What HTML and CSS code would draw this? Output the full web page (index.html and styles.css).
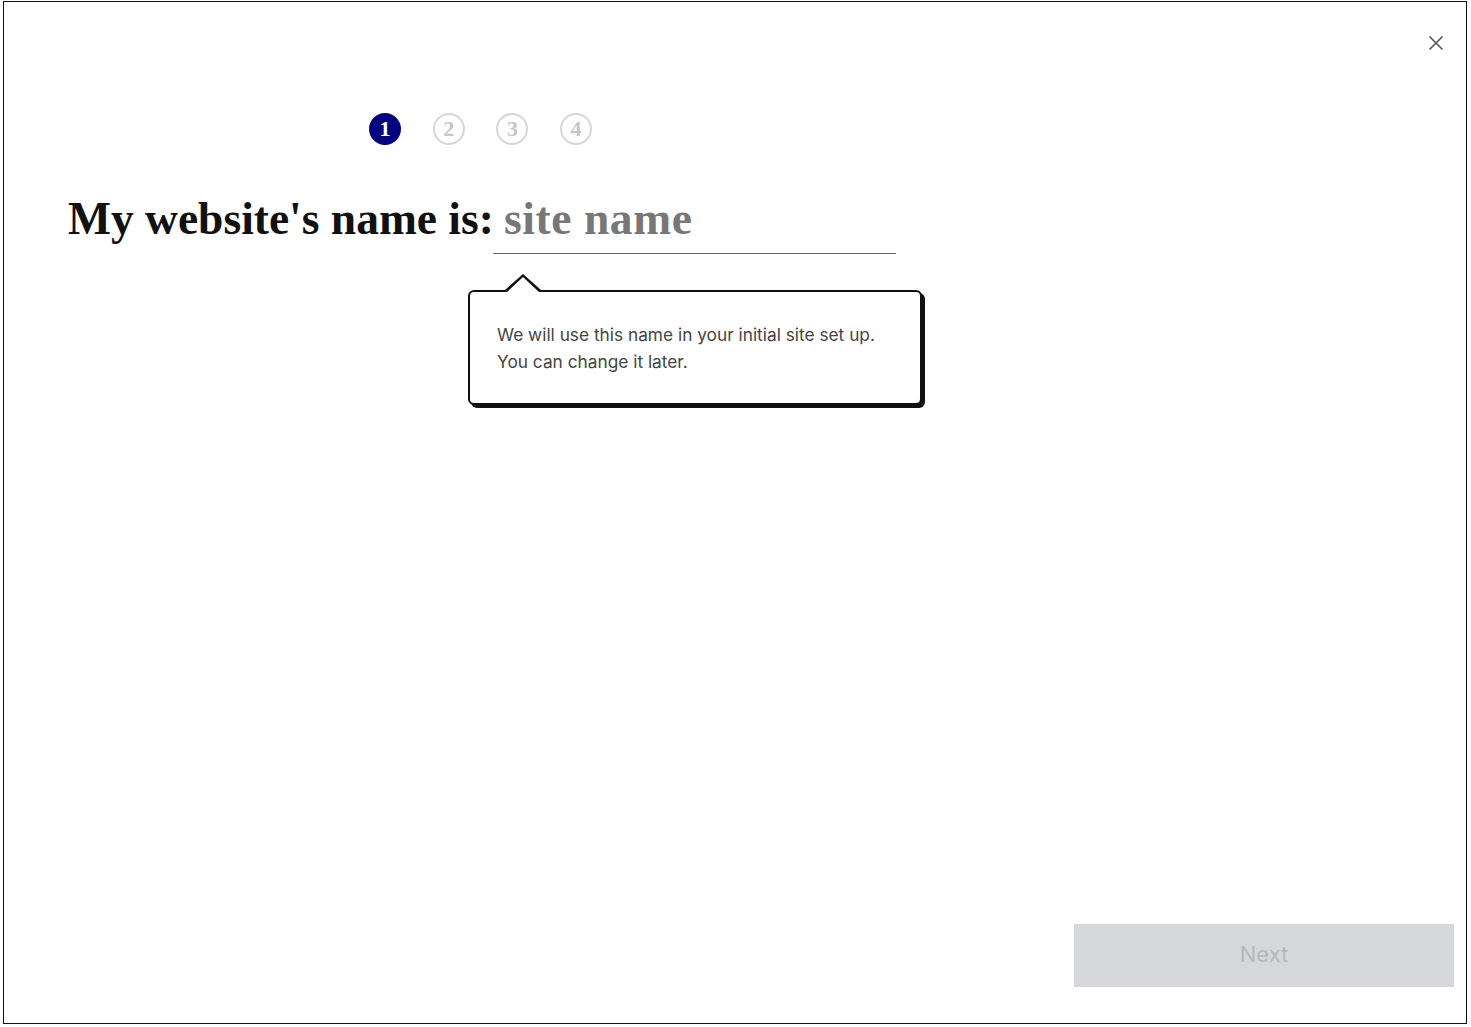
FILE: index.html
```html
<!DOCTYPE html>
<html lang="en">
  <head>
    <meta charset="UTF-8" />
    <meta name="viewport" content="width=device-width, initial-scale=1.0" />
    <title>Site setup</title>
    <link rel="stylesheet" href="styles.css">
  </head>
  <body>
    <div class="frame">
      <div class="top-bar">
        <button class="close" aria-label="Close">
          <svg width="16" height="16" viewBox="0 0 16 16">
            <path d="M1.5 1.5 L14.5 14.5 M14.5 1.5 L1.5 14.5" stroke="#555" stroke-width="1.6" fill="none" />
          </svg>
        </button>
      </div>

      <div class="steps">
        <span class="step active">1</span>
        <span class="step">2</span>
        <span class="step">3</span>
        <span class="step">4</span>
      </div>

      <div class="name-row">
        <h1>My website's name is:</h1>
        <input class="site-input" type="text" placeholder="site name" />
      </div>

      <div class="tip">
        <p>
          We will use this name in your initial site set up.<br />
          You can change it later.
        </p>
      </div>

      <div class="footer">
        <button class="next" disabled>Next</button>
      </div>
    </div>
  </body>
</html>
```

FILE: styles.css
```css
body {
  margin: 0;
  padding: 1px 0 0 3px;
  background: #fff;
}

.frame {
  width: 1462px;
  height: 1021px;
  border: 1px solid #111;
  display: flex;
  flex-direction: column;
  font-family: 'Liberation Serif', serif;
}

.top-bar {
  display: flex;
  justify-content: flex-end;
  padding: 32px 21px 0 0;
}

.close {
  background: none;
  border: none;
  padding: 0;
  width: 18px;
  height: 18px;
  display: flex;
  align-items: center;
  justify-content: center;
  cursor: pointer;
}

.steps {
  display: flex;
  gap: 31.7px;
  margin: 61px 0 0 365px;
}

.step {
  width: 28px;
  height: 28px;
  border: 2px solid #d6d6d6;
  border-radius: 50%;
  display: flex;
  align-items: center;
  justify-content: center;
  font-weight: bold;
  font-size: 22px;
  color: #c6c6c6;
}

.step.active {
  background: #000080;
  border-color: #000080;
  color: #fff;
}

.name-row {
  display: flex;
  align-items: baseline;
  margin: 47px 0 0 64px;
}

h1 {
  margin: 0;
  font-size: 45.5px;
  font-weight: bold;
  color: #111;
}

.site-input {
  width: 392px;
  margin-left: -1px;
  padding: 0 0 8px 11px;
  border: none;
  border-bottom: 1px solid #666;
  font-family: 'Liberation Serif', serif;
  font-size: 45.5px;
  font-weight: bold;
  letter-spacing: 0.6px;
  outline: none;
  background: transparent;
}

.site-input::placeholder {
  color: #777;
}

.tip {
  position: relative;
  width: 450px;
  margin: 36px 0 0 464px;
  border: 2px solid #111;
  border-radius: 6px;
  box-shadow: 3px 3px 0 #111;
  background: #fff;
}

.tip::before,
.tip::after {
  content: '';
  position: absolute;
  left: 35px;
  width: 0;
  height: 0;
  border-left: 18px solid transparent;
  border-right: 18px solid transparent;
}

.tip::before {
  top: -18px;
  border-bottom: 16px solid #111;
}

.tip::after {
  top: -15px;
  left: 37px;
  border-left-width: 16px;
  border-right-width: 16px;
  border-bottom: 15px solid #fff;
}

.tip p {
  margin: 0;
  padding: 29px 20px 28px 27px;
  font-family: 'Inter', 'Noto Sans', sans-serif;
  font-size: 17.3px;
  line-height: 27px;
  color: #444;
}

.footer {
  margin-top: auto;
  display: flex;
  justify-content: flex-end;
  padding: 0 12px 36px 0;
}

.next {
  width: 380px;
  height: 63px;
  padding: 0 0 3px;
  border: none;
  background: #d6d7da;
  color: #b6b8bc;
  font-family: 'Inter', 'Noto Sans', sans-serif;
  font-size: 22px;
}
```
